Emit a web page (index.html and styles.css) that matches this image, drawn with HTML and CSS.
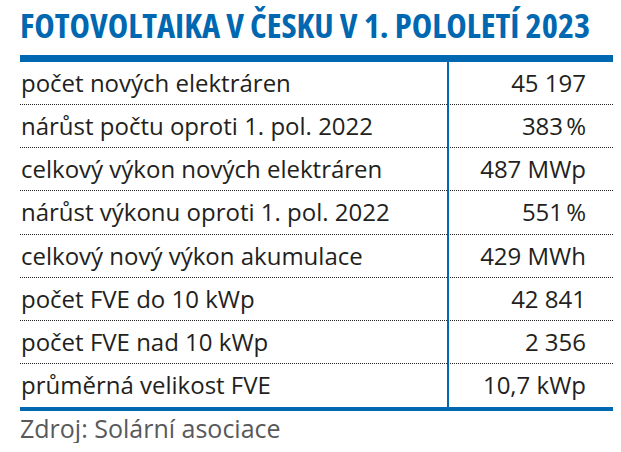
FILE: index.html
```html
<!DOCTYPE html>
<html lang="cs">
<head>
<meta charset="utf-8">
<title>Fotovoltaika v Česku v 1. pololetí 2023</title>
<link rel="stylesheet" href="styles.css">
</head>
<body>
<div class="panel">
  <h1 class="title">FOTOVOLTAIKA V ČESKU V 1. POLOLETÍ 2023</h1>
  <div class="table">
    <div class="row"><span class="label">počet nových elektráren</span><span class="value">45 197</span></div>
    <div class="row"><span class="label">nárůst počtu oproti 1. pol. 2022</span><span class="value">383&#8239;%</span></div>
    <div class="row"><span class="label">celkový výkon nových elektráren</span><span class="value">487 MWp</span></div>
    <div class="row"><span class="label">nárůst výkonu oproti 1. pol. 2022</span><span class="value">551&#8239;%</span></div>
    <div class="row"><span class="label">celkový nový výkon akumulace</span><span class="value">429 MWh</span></div>
    <div class="row"><span class="label">počet FVE do 10 kWp</span><span class="value">42 841</span></div>
    <div class="row"><span class="label">počet FVE nad 10 kWp</span><span class="value">2 356</span></div>
    <div class="row"><span class="label">průměrná velikost FVE</span><span class="value">10,7 kWp</span></div>
  </div>
  <p class="source">Zdroj: Solární asociace</p>
</div>
</body>
</html>
```

FILE: styles.css
```css
html, body {
  margin: 0;
  padding: 0;
  background: #ffffff;
}

.panel {
  width: 593px;
  padding: 0 8px 0 20px;
  font-family: "Open Sans", "Liberation Sans", sans-serif;
  color: #231f20;
}

.title {
  margin: 0;
  height: 55px;
  box-sizing: border-box;
  padding-top: 6px;
  font-family: "Open Sans", "DejaVu Sans Condensed", sans-serif;
  font-weight: 700;
  font-stretch: 75%;
  font-size: 34.5px;
  line-height: 38px;
  color: #0067b1;
  white-space: nowrap;
}

.table {
  position: relative;
  border-top: 7px solid #0067b1;
  border-bottom: 4px solid #0067b1;
  display: grid;
  grid-template-rows: repeat(8, 1fr);
  height: 345px;
}

.table::after {
  content: "";
  position: absolute;
  left: 427px;
  top: 0;
  bottom: 0;
  width: 2px;
  background: #0067b1;
}

.row {
  display: flex;
  align-items: center;
  justify-content: space-between;
  border-bottom: 1px dotted #231f20;
  font-size: 24px;
  line-height: 30px;
}

.row:last-child {
  border-bottom: none;
}

.label {
  padding-left: 1px;
}

.value {
  padding-right: 27px;
}

.source {
  margin: 2px 0 0 0;
  font-size: 25px;
  line-height: 30px;
  color: #58595b;
}
```
